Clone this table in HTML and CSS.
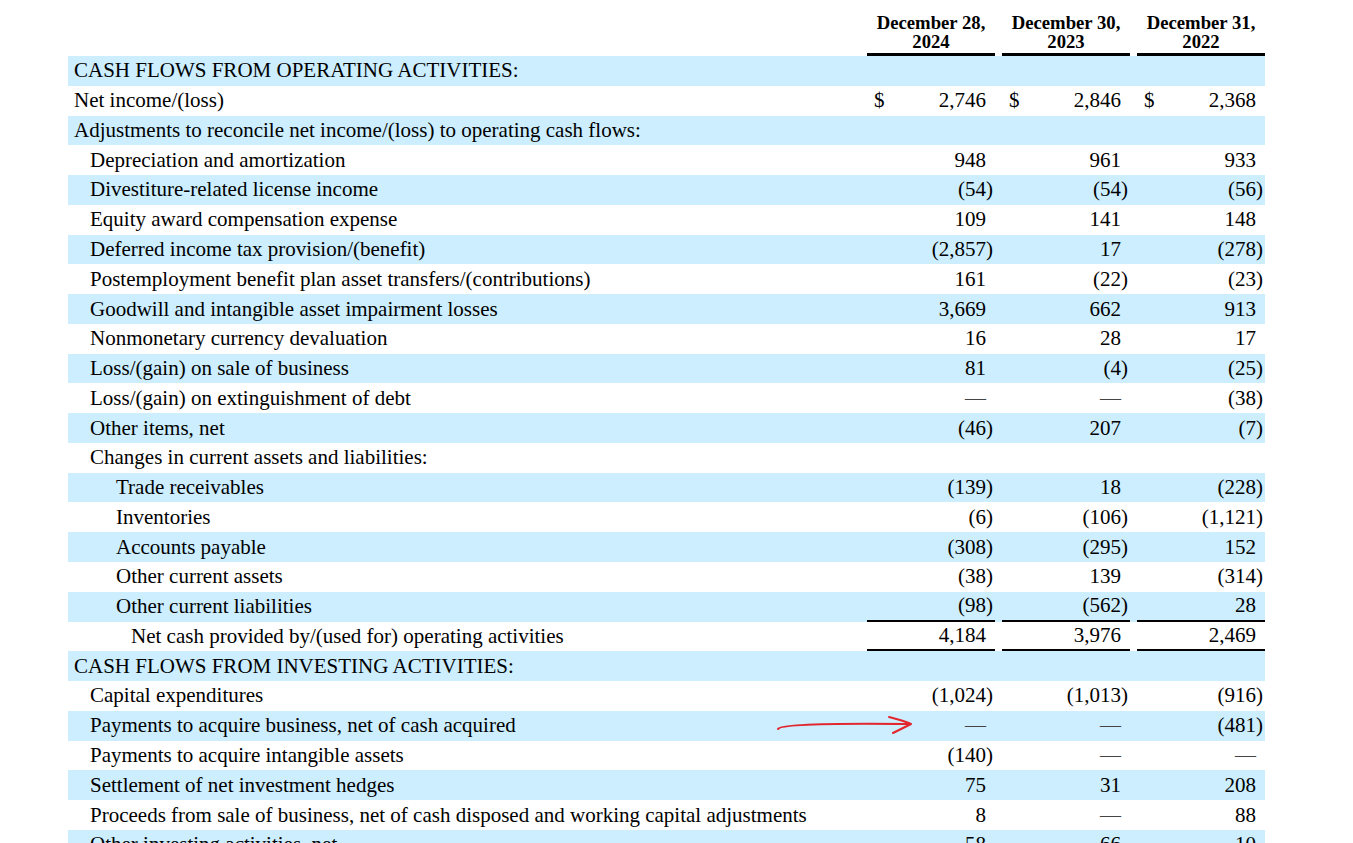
FILE: index.html
```html
<!DOCTYPE html>
<html>
<head>
<meta charset="utf-8">
<link rel="stylesheet" href="styles.css">
</head>
<body>
<div class="page">
  <div class="row head">
    <div class="label"></div>
    <div class="hcell">December 28,<br>2024</div>
    <div class="hcell">December 30,<br>2023</div>
    <div class="hcell">December 31,<br>2022</div>
  </div>

  <div class="row s"><div class="label l0">CASH FLOWS FROM OPERATING ACTIVITIES:</div><div class="v"></div><div class="v"></div><div class="v"></div></div>
  <div class="row"><div class="label l0">Net income/(loss)</div><div class="v d"><span>$</span><span class="n">2,746</span></div><div class="v d"><span>$</span><span class="n">2,846</span></div><div class="v d"><span>$</span><span class="n">2,368</span></div></div>
  <div class="row s"><div class="label l0">Adjustments to reconcile net income/(loss) to operating cash flows:</div><div class="v"></div><div class="v"></div><div class="v"></div></div>
  <div class="row"><div class="label l1">Depreciation and amortization</div><div class="v"><span class="n">948</span></div><div class="v"><span class="n">961</span></div><div class="v"><span class="n">933</span></div></div>
  <div class="row s"><div class="label l1">Divestiture-related license income</div><div class="v">(54)</div><div class="v">(54)</div><div class="v">(56)</div></div>
  <div class="row"><div class="label l1">Equity award compensation expense</div><div class="v"><span class="n">109</span></div><div class="v"><span class="n">141</span></div><div class="v"><span class="n">148</span></div></div>
  <div class="row s"><div class="label l1">Deferred income tax provision/(benefit)</div><div class="v">(2,857)</div><div class="v"><span class="n">17</span></div><div class="v">(278)</div></div>
  <div class="row"><div class="label l1">Postemployment benefit plan asset transfers/(contributions)</div><div class="v"><span class="n">161</span></div><div class="v">(22)</div><div class="v">(23)</div></div>
  <div class="row s"><div class="label l1">Goodwill and intangible asset impairment losses</div><div class="v"><span class="n">3,669</span></div><div class="v"><span class="n">662</span></div><div class="v"><span class="n">913</span></div></div>
  <div class="row"><div class="label l1">Nonmonetary currency devaluation</div><div class="v"><span class="n">16</span></div><div class="v"><span class="n">28</span></div><div class="v"><span class="n">17</span></div></div>
  <div class="row s"><div class="label l1">Loss/(gain) on sale of business</div><div class="v"><span class="n">81</span></div><div class="v">(4)</div><div class="v">(25)</div></div>
  <div class="row"><div class="label l1">Loss/(gain) on extinguishment of debt</div><div class="v"><span class="n dash">—</span></div><div class="v"><span class="n dash">—</span></div><div class="v">(38)</div></div>
  <div class="row s"><div class="label l1">Other items, net</div><div class="v">(46)</div><div class="v"><span class="n">207</span></div><div class="v">(7)</div></div>
  <div class="row"><div class="label l1">Changes in current assets and liabilities:</div><div class="v"></div><div class="v"></div><div class="v"></div></div>
  <div class="row s"><div class="label l2">Trade receivables</div><div class="v">(139)</div><div class="v"><span class="n">18</span></div><div class="v">(228)</div></div>
  <div class="row"><div class="label l2">Inventories</div><div class="v">(6)</div><div class="v">(106)</div><div class="v">(1,121)</div></div>
  <div class="row s"><div class="label l2">Accounts payable</div><div class="v">(308)</div><div class="v">(295)</div><div class="v"><span class="n">152</span></div></div>
  <div class="row"><div class="label l2">Other current assets</div><div class="v">(38)</div><div class="v"><span class="n">139</span></div><div class="v">(314)</div></div>
  <div class="row s"><div class="label l2">Other current liabilities</div><div class="v ul">(98)</div><div class="v ul">(562)</div><div class="v ul"><span class="n">28</span></div></div>
  <div class="row"><div class="label l3">Net cash provided by/(used for) operating activities</div><div class="v ul"><span class="n">4,184</span></div><div class="v ul"><span class="n">3,976</span></div><div class="v ul"><span class="n">2,469</span></div></div>
  <div class="row s"><div class="label l0">CASH FLOWS FROM INVESTING ACTIVITIES:</div><div class="v"></div><div class="v"></div><div class="v"></div></div>
  <div class="row"><div class="label l1">Capital expenditures</div><div class="v">(1,024)</div><div class="v">(1,013)</div><div class="v">(916)</div></div>
  <div class="row s"><div class="label l1">Payments to acquire business, net of cash acquired</div><div class="v"><span class="n dash">—</span></div><div class="v"><span class="n dash">—</span></div><div class="v">(481)</div></div>
  <div class="row"><div class="label l1">Payments to acquire intangible assets</div><div class="v">(140)</div><div class="v"><span class="n dash">—</span></div><div class="v"><span class="n dash">—</span></div></div>
  <div class="row s"><div class="label l1">Settlement of net investment hedges</div><div class="v"><span class="n">75</span></div><div class="v"><span class="n">31</span></div><div class="v"><span class="n">208</span></div></div>
  <div class="row"><div class="label l1">Proceeds from sale of business, net of cash disposed and working capital adjustments</div><div class="v"><span class="n">8</span></div><div class="v"><span class="n dash">—</span></div><div class="v"><span class="n">88</span></div></div>
  <div class="row s"><div class="label l1">Other investing activities, net</div><div class="v"><span class="n">58</span></div><div class="v"><span class="n">66</span></div><div class="v"><span class="n">10</span></div></div>

  <svg class="arrow" width="150" height="30" viewBox="0 0 150 30">
    <path d="M3 18 C 5 14, 40 12, 133 13" fill="none" stroke="#e3262d" stroke-width="2" stroke-linecap="round"/>
    <path d="M114 6 C 122 8, 130 10, 136 13 C 130 16, 124 19, 118 22" fill="none" stroke="#e3262d" stroke-width="2" stroke-linecap="round" stroke-linejoin="round"/>
  </svg>
</div>
</body>
</html>
```
FILE: styles.css
```css
html, body {
  margin: 0;
  padding: 0;
  background: #ffffff;
  overflow: hidden;
}

.page {
  position: relative;
  padding: 13px 0 0 68px;
  font-family: "Liberation Serif", "Times New Roman", serif;
  font-size: 21px;
  color: #000;
}

.row {
  display: grid;
  grid-template-columns: 792px 128px 128px 128px;
  column-gap: 7px;
  width: 1197px;
  height: 29.77px;
  align-items: stretch;
}

.row.s {
  background: #cceeff;
}

.row.head {
  height: auto;
  background: transparent;
}

.hcell {
  font-weight: bold;
  font-size: 18.7px;
  line-height: 19px;
  text-align: center;
  padding-bottom: 2px;
  border-bottom: 3px solid #000;
}

.label {
  display: flex;
  align-items: center;
  white-space: nowrap;
  line-height: 1;
}

.l0 { padding-left: 6px; }
.l1 { padding-left: 22px; }
.l2 { padding-left: 48px; }
.l3 { padding-left: 63px; }

.v {
  display: flex;
  align-items: center;
  justify-content: flex-end;
  padding-right: 2px;
  box-sizing: border-box;
  line-height: 1;
  white-space: nowrap;
}

.v.d {
  justify-content: space-between;
  padding-left: 7px;
}

.n {
  padding-right: 0.333em;
}

.dash {
  color: #444;
}

.v.ul {
  border-bottom: 2px solid #000;
}

.arrow {
  position: absolute;
  left: 775px;
  top: 711px;
}
```
